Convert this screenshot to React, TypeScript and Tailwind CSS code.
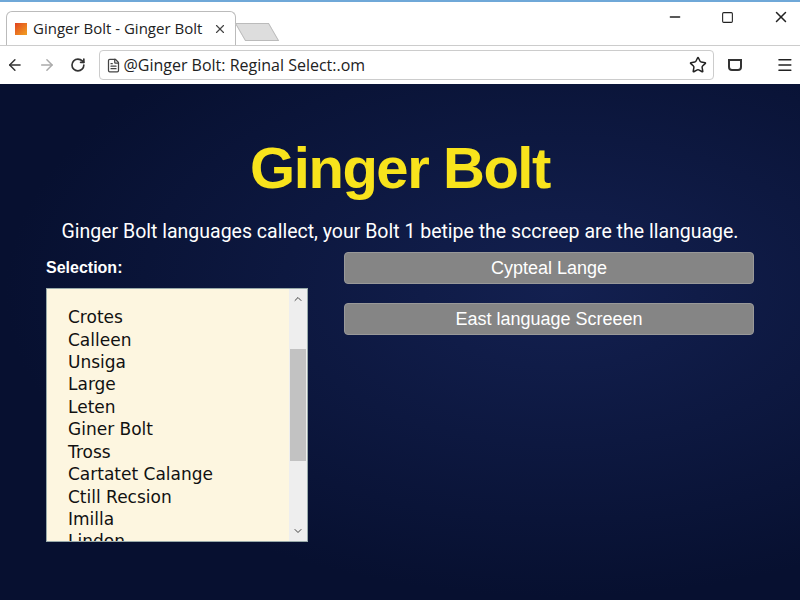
import { ArrowLeft, ArrowRight, RotateCw, FileText, Star, Menu, Minus, Square, X, ChevronUp, ChevronDown } from "lucide-react"

const items = ["Crotes", "Calleen", "Unsiga", "Large", "Leten", "Giner Bolt", "Tross", "Cartatet Calange", "Ctill Recsion", "Imilla", "Lindon"]

export default function App() {
  return (
    <div className="w-[800px] h-[600px] overflow-hidden flex flex-col bg-white" style={{ fontFamily: '"Liberation Sans", Arial, sans-serif' }}>
      {/* Title bar */}
      <div className="h-[45px] border-t-2 border-[#6fa8d8] bg-white flex items-end relative">
        <div className="ml-[6px] h-[34px] w-[230px] bg-white border border-b-0 border-[#bbb] rounded-t-md flex items-center px-[8px] gap-[6px]">
          <div className="w-[12px] h-[12px] bg-gradient-to-br from-[#e04020] to-[#f0a020]" />
          <span className="text-[15px] text-[#222] flex-1" style={{ fontFamily: '"Open Sans", sans-serif' }}>Ginger Bolt - Ginger Bolt</span>
          <X size={14} className="text-[#444]" />
        </div>
        <div className="ml-[4px] mb-[4px] h-[18px] w-[34px] bg-[#ddd] border border-[#bbb] skew-x-[30deg]" />
        <div className="absolute right-0 top-[6px] flex items-center gap-[38px] pr-[10px] text-[#222]">
          <Minus size={16} />
          <Square size={13} />
          <X size={18} />
        </div>
      </div>
      {/* Toolbar */}
      <div className="h-[39px] bg-white border-t border-[#ccc] flex items-center px-[6px] gap-[14px]">
        <ArrowLeft size={18} className="text-[#333]" />
        <ArrowRight size={18} className="text-[#aaa]" />
        <RotateCw size={16} className="text-[#333]" strokeWidth={2.5} />
        <div className="h-[30px] w-[622px] border border-[#ccc] rounded-sm flex items-center px-[6px] gap-[2px]">
          <FileText size={15} className="text-[#444]" />
          <span className="text-[16px] text-[#222]" style={{ fontFamily: '"Open Sans", sans-serif' }}>@Ginger Bolt: Reginal Select:.om</span>
          <Star size={18} className="ml-auto text-[#222]" />
        </div>
        <div className="w-[14px] h-[12px] border-2 border-[#333] rounded-b-sm" />
        <Menu size={18} className="ml-[20px] text-[#222]" />
      </div>
      {/* Content */}
      <div className="flex-1 bg-[radial-gradient(ellipse_at_70%_40%,#132050,#071030_70%)] flex flex-col items-center">
        <h1 className="mt-[55px] text-[58px] font-bold text-[#f8e31c] leading-none tracking-tight">Ginger Bolt</h1>
        <p className="mt-[20px] text-[19.5px] text-white" style={{ fontFamily: 'Roboto, sans-serif' }}>Ginger Bolt languages callect, your Bolt 1 betipe the sccreep are the llanguage.</p>
        <div className="w-full mt-[8px] flex px-[46px] gap-[36px]">
          <div className="w-[262px]">
            <div className="text-[16px] font-bold text-white mt-[2px]">Selection:</div>
            <div className="mt-[8px] h-[254px] bg-[#fdf6e0] border border-[#9aa] flex">
              <div className="flex-1 pl-[21px] pt-[17px] overflow-hidden text-[17px] leading-[22.4px] text-[#111]" style={{ fontFamily: '"DejaVu Sans", sans-serif' }}>
                {items.map(i => <div key={i}>{i}</div>)}
              </div>
              <div className="w-[18px] bg-[#eee] flex flex-col items-center">
                <ChevronUp size={12} className="mt-[4px] text-[#444]" />
                <div className="mt-[44px] w-[16px] h-[112px] bg-[#c2c2c2]" />
                <ChevronDown size={12} className="mt-auto mb-[4px] text-[#444]" />
              </div>
            </div>
          </div>
          <div className="flex-1 flex flex-col gap-[19px] -mt-[2px]">
            {["Cypteal Lange", "East language Screeen"].map(b => (
              <div key={b} className="h-[32px] bg-[#858585] rounded-[4px] flex items-center justify-center text-[18px] text-white border border-[#999]">{b}</div>
            ))}
          </div>
        </div>
      </div>
    </div>
  )
}
